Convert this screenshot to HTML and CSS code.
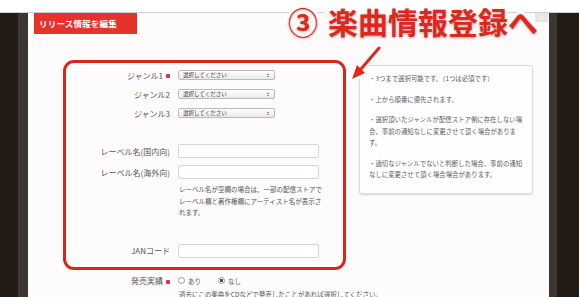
FILE: index.html
```html
<!DOCTYPE html>
<html lang="ja">
<head>
  <meta charset="UTF-8">
  <title>リリース情報を編集</title>
  <link rel="stylesheet" href="styles.css">
</head>
<body>
  <div class="topband"></div>
  <div class="screen">
    <div class="backdrop backdrop-left"></div>
    <div class="shade"></div>

    <div class="modal">
      <div class="modal-tab">リリース情報を編集</div>
      <span class="modal-close">×</span>

      <div class="modal-body">
        <div class="form-col">
          <div class="highlight">
            <div class="row row-genre">
              <label>ジャンル1<i class="req"></i></label>
              <div class="select">選択してください</div>
            </div>
            <div class="row row-genre">
              <label>ジャンル2</label>
              <div class="select">選択してください</div>
            </div>
            <div class="row row-genre">
              <label>ジャンル3</label>
              <div class="select">選択してください</div>
            </div>

            <div class="row row-label">
              <label>レーベル名(国内向)</label>
              <div class="input"></div>
            </div>
            <div class="row row-label2">
              <label>レーベル名(海外向)</label>
              <div class="input"></div>
            </div>
            <p class="help">レーベル名が空欄の場合は、一部の配信ストアでレーベル欄と著作権欄にアーティスト名が表示されます。</p>

            <div class="row row-jan">
              <label>JANコード</label>
              <div class="input"></div>
            </div>
          </div>

          <div class="row row-release">
            <label>発売実績<i class="req"></i></label>
            <span class="radio"></span><span class="radio-text">あり</span>
            <span class="radio checked"></span><span class="radio-text">なし</span>
          </div>
          <p class="note">過去にこの楽曲をCDなどで発売したことがあれば選択してください。</p>
        </div>

        <aside class="info">
          <p>・3つまで選択可能です。（1つは必須です）</p>
          <p>・上から順番に優先されます。</p>
          <p>・選択頂いたジャンルが配信ストア側に存在しない場合、事前の通知なしに変更させて頂く場合があります。</p>
          <p>・適切なジャンルでないと判断した場合、事前の通知なしに変更させて頂く場合場合があります。</p>
        </aside>
      </div>
    </div>

    <div class="shade shade-right"></div>
    <div class="backdrop"></div>
  </div>

  <div class="callout"><span class="callout-num">③</span>楽曲情報登録へ</div>
  <svg class="arrow" width="44" height="44" viewBox="0 0 44 44">
    <g stroke="#fff" stroke-width="6" stroke-linejoin="round" stroke-linecap="round" fill="#fff">
      <line x1="15" y1="25" x2="33" y2="4"/>
      <polygon points="6,35 19,29 11,21"/>
    </g>
    <line x1="15" y1="25" x2="33" y2="4" stroke="#e2261c" stroke-width="3" stroke-linecap="round"/>
    <polygon points="6,35 19,29 11,21" fill="#e2261c"/>
  </svg>
</body>
</html>
```

FILE: styles.css
```css
body {
  margin: 0;
  height: 297px;
  overflow: hidden;
  background: #fff;
  font-family: "Noto Sans CJK JP", "Noto Sans", sans-serif;
  color: #555;
}

.topband {
  height: 12px;
  background: #fff;
}

.screen {
  display: flex;
  height: 285px;
  border-top: 1px solid #cfcfcf;
  box-sizing: border-box;
}

.backdrop {
  flex: 1;
  background: #241b15;
}

.backdrop-left {
  flex: 0 0 18px;
}

.shade {
  width: 10px;
  background: #3c3635;
}

.shade-right {
  width: 8px;
}

.modal {
  position: relative;
  width: 521px;
  background: #fdfbfb;
  padding-left: 6px;
  box-sizing: border-box;
}

.modal-tab {
  width: 103px;
  height: 21px;
  background: #e5332a;
  color: #fff;
  font-size: 8.5px;
  font-weight: 700;
  line-height: 21px;
  padding-left: 5px;
  box-sizing: border-box;
  letter-spacing: 0.2px;
}

.modal-close {
  position: absolute;
  top: 0;
  right: 1px;
  width: 13px;
  height: 9px;
  background: #e6e4e4;
  color: #fff;
  font-size: 7px;
  line-height: 9px;
  text-align: center;
}

.modal-body {
  display: flex;
  align-items: flex-start;
  margin-top: 26px;
  margin-left: 29px;
}

.form-col {
  width: 283px;
}

.highlight {
  border: 3px solid #d8261b;
  border-radius: 11px;
  padding: 6px 0 9px;
}

.row {
  display: flex;
  align-items: center;
}

.row label {
  width: 104px;
  margin-right: 8px;
  text-align: right;
  font-size: 8px;
  color: #555;
  white-space: nowrap;
}

.req {
  display: inline-block;
  width: 4px;
  height: 4px;
  margin-left: 3px;
  vertical-align: middle;
  background: #e0304a;
  border-radius: 1px;
}

.row-genre {
  height: 12px;
  margin-bottom: 7px;
}

.select {
  position: relative;
  width: 97px;
  height: 10px;
  box-sizing: border-box;
  border: 1px solid #b9b9b9;
  border-radius: 2px;
  background: linear-gradient(#fff, #e9e9e9);
  font-size: 5.5px;
  line-height: 8px;
  padding-left: 4px;
  color: #333;
}

.select::after {
  content: ":";
  position: absolute;
  right: 5px;
  top: 0;
  font-size: 6px;
  font-weight: 700;
  line-height: 8px;
}

.input {
  width: 141px;
  height: 14px;
  box-sizing: border-box;
  border: 1px solid #d6d6d6;
  border-radius: 2px;
  background: #fff;
}

.row-label {
  margin-top: 25px;
}

.row-label2 {
  margin-top: 7px;
}

.help {
  margin: 5px 0 0 113px;
  width: 144px;
  font-size: 6.5px;
  line-height: 11.5px;
  color: #555;
}

.row-jan {
  margin-top: 25px;
}

.row-release {
  margin-top: 5px;
  height: 12px;
}

.row-release label {
  width: 107px;
}

.radio {
  width: 7px;
  height: 7px;
  box-sizing: border-box;
  border: 1px solid #9a9a9a;
  border-radius: 50%;
  background: #fff;
  margin-right: 3px;
}

.radio.checked {
  background: radial-gradient(circle, #555 1.5px, #fff 2px);
}

.radio-text {
  font-size: 6.5px;
  margin-right: 17px;
}

.note {
  margin: 2px 0 0 116px;
  font-size: 6.5px;
  white-space: nowrap;
  color: #555;
}

.info {
  width: 174px;
  height: 129px;
  margin: 5px 0 0 13px;
  padding: 7px 9px 0 9px;
  box-sizing: border-box;
  background: #fefefe;
  border: 1px solid #dedede;
  border-radius: 3px;
  box-shadow: 0 1px 2px rgba(0, 0, 0, 0.15);
  font-size: 6.4px;
  line-height: 11.5px;
  color: #5a5a5a;
}

.info p {
  margin: 0 0 9px;
}

.callout {
  position: absolute;
  left: 288px;
  top: 0;
  font-size: 30px;
  line-height: 42px;
  font-weight: 700;
  color: #e2261c;
  -webkit-text-stroke: 6px #fff;
  paint-order: stroke fill;
  text-shadow: 0 1px 3px rgba(0, 0, 0, 0.35);
  white-space: nowrap;
}

.callout-num {
  margin-right: 10px;
}

.arrow {
  position: absolute;
  left: 346px;
  top: 44px;
}
```
